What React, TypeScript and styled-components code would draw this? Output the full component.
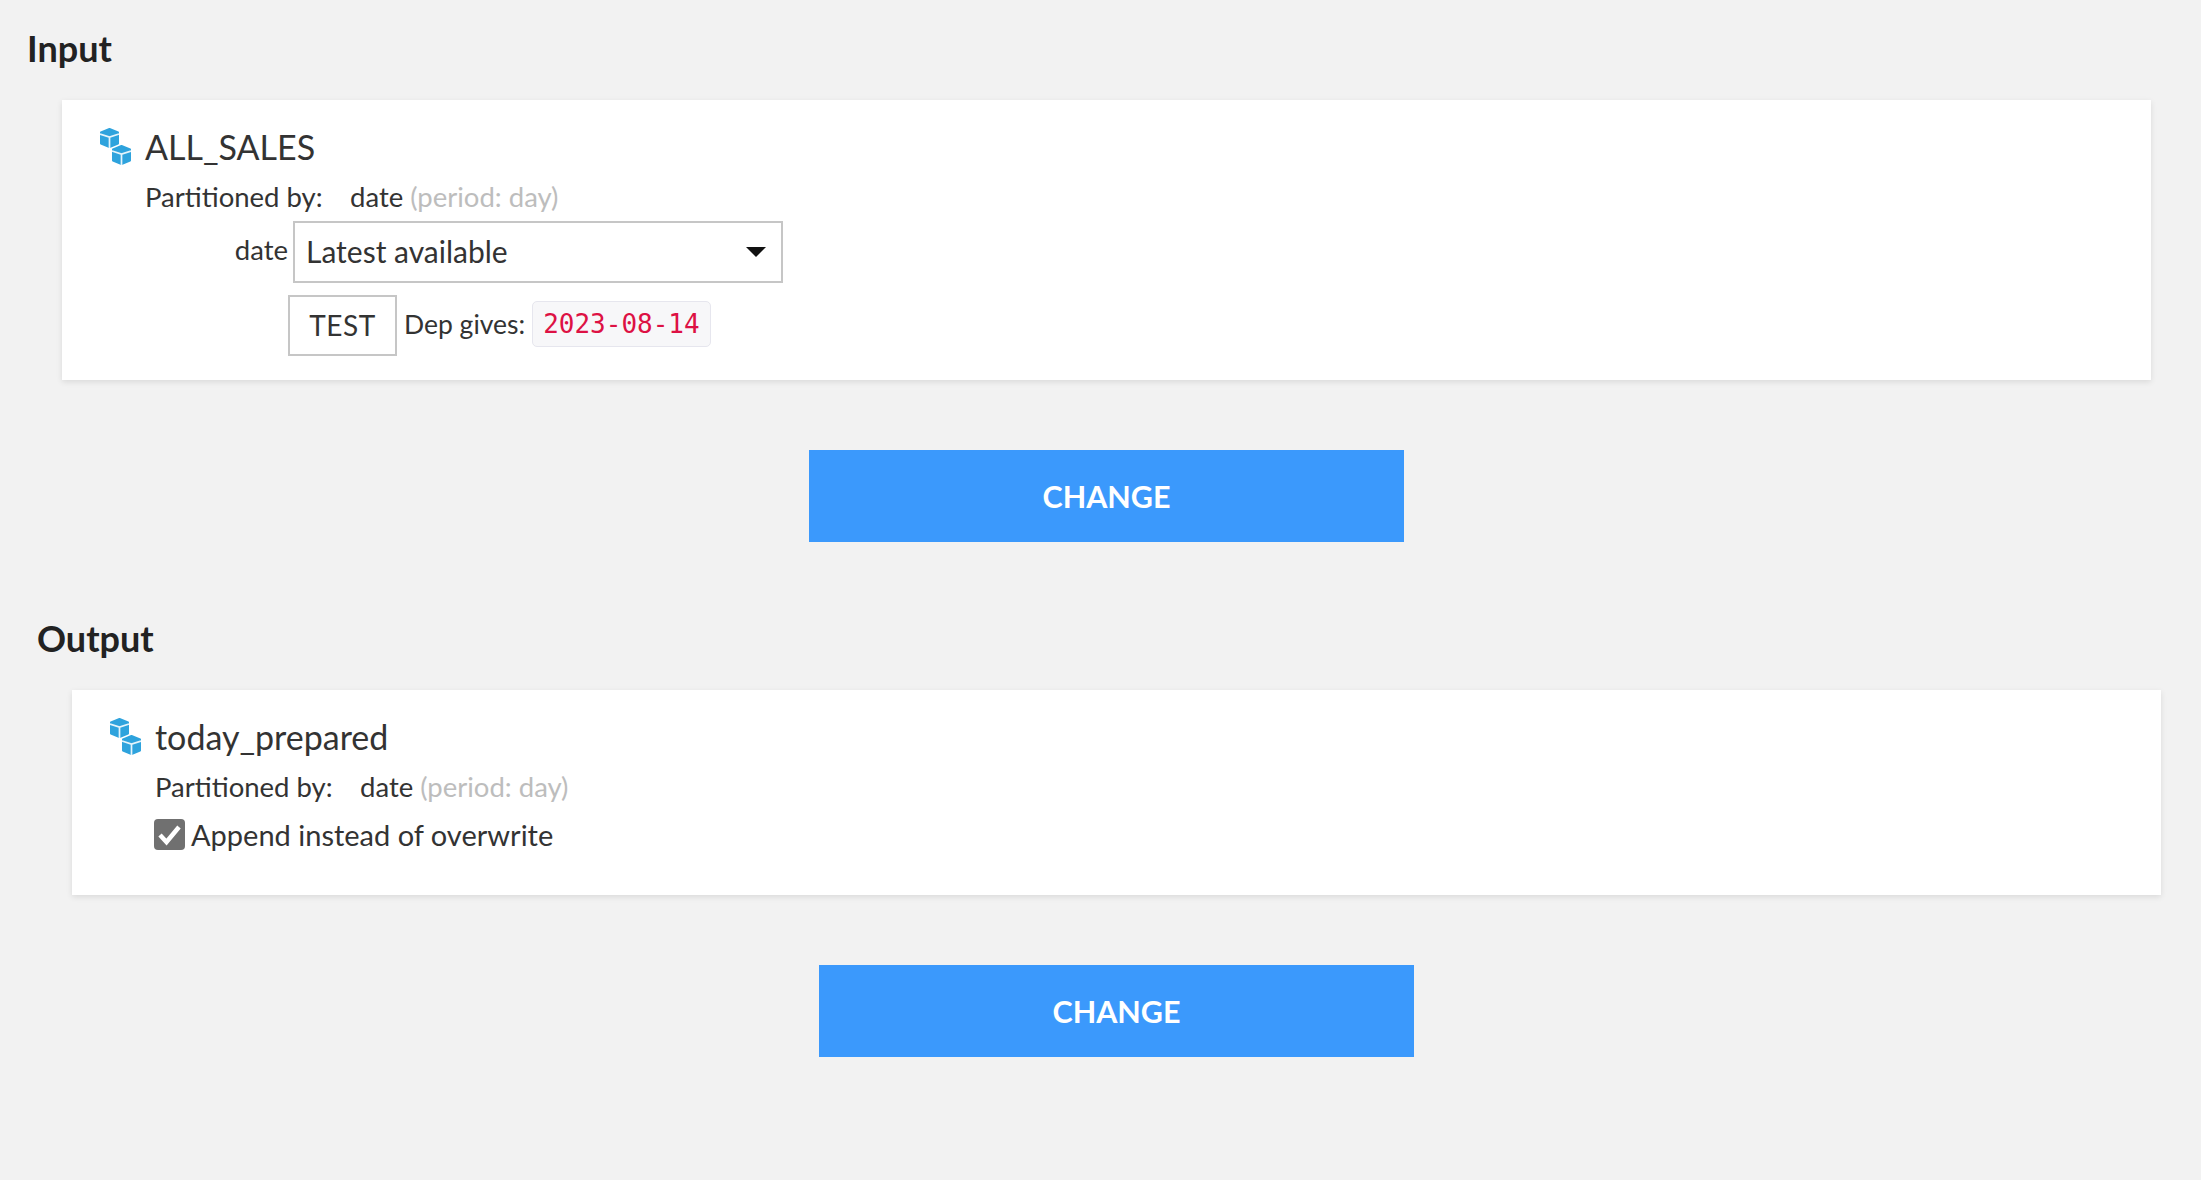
import styled, { createGlobalStyle } from 'styled-components';

const GlobalStyle = createGlobalStyle`
  html, body {
    margin: 0;
    background: #f2f2f2;
  }
  body {
    font-family: 'Lato', 'Noto Sans', sans-serif;
    color: #333;
  }
`;

const Page = styled.div`
  min-height: 1180px;
  padding-top: 27px;
  box-sizing: border-box;
`;

const Section = styled.section<{ $offset: number; $gap?: number }>`
  margin-left: ${({ $offset }) => $offset}px;
  margin-top: ${({ $gap }) => $gap ?? 0}px;
  width: 2124px;
`;

const Title = styled.h2`
  margin: -1px 0 30px;
  font-size: 36px;
  line-height: 44px;
  font-weight: 700;
  color: #222;
`;

const Card = styled.div`
  margin-left: 35px;
  width: 2089px;
  box-sizing: border-box;
  background: #fff;
  box-shadow: 0 2px 6px rgba(0, 0, 0, 0.1);
  padding: 26px 0 24px 38px;
`;

const NameRow = styled.div`
  display: flex;
  align-items: center;
  gap: 14px;
  height: 40px;
`;

const DatasetName = styled.span`
  font-size: 34px;
  color: #333;
`;

const Details = styled.div`
  margin-left: 45px;
  margin-top: 12px;
`;

const PartitionRow = styled.div`
  display: flex;
  align-items: center;
  height: 36px;
  font-size: 27.5px;
`;

const PartitionLabel = styled.span`
  width: 205px;
`;

const Period = styled.span`
  margin-left: 7px;
  color: #bdbdbd;
`;

const SelectRow = styled.div`
  display: flex;
  align-items: center;
  gap: 5px;
  margin-top: 7px;
  font-size: 27.5px;
`;

const SelectLabel = styled.span`
  width: 143px;
  text-align: right;
  margin-top: -6px;
`;

const Select = styled.div`
  display: flex;
  align-items: center;
  justify-content: space-between;
  width: 490px;
  height: 62px;
  box-sizing: border-box;
  padding: 0 15px 2px 11px;
  background: #fff;
  border: 2px solid #c6c6c6;
  font-size: 30px;
`;

const Caret = styled.span`
  width: 0;
  height: 0;
  margin-top: 2px;
  border-left: 10px solid transparent;
  border-right: 10px solid transparent;
  border-top: 10px solid #111;
`;

const TestRow = styled.div`
  display: flex;
  align-items: center;
  margin: 12px 0 0 143px;
  padding-bottom: 3px;
  font-size: 26.5px;
`;

const TestButton = styled.button`
  width: 109px;
  height: 61px;
  box-sizing: border-box;
  background: #fff;
  border: 2px solid #c6c6c6;
  color: #333;
  font-family: inherit;
  font-size: 28px;
  letter-spacing: 0.5px;
  padding: 0 0 2px;
  margin: 0 7px -3px 0;
`;

const Code = styled.code`
  display: inline-block;
  margin-left: 7px;
  padding: 0 10px;
  height: 46px;
  line-height: 44px;
  box-sizing: border-box;
  font-family: 'DejaVu Sans Mono', 'Liberation Mono', monospace;
  font-size: 26px;
  color: #dd1144;
  background: #f7f7f9;
  border: 1px solid #e6e6ee;
  border-radius: 5px;
`;

const CheckRow = styled.label`
  display: flex;
  align-items: center;
  gap: 6px;
  margin-top: 13px;
  margin-bottom: 19px;
  font-size: 29px;
`;

const CheckBox = styled.span`
  display: flex;
  align-items: center;
  justify-content: center;
  width: 31px;
  height: 31px;
  margin-left: -1px;
  border-radius: 4px;
  background: #707070;
`;

const ButtonRow = styled.div`
  display: flex;
  justify-content: center;
  margin: 70px 0 0 35px;
  width: 2089px;
`;

const ChangeButton = styled.button`
  width: 595px;
  height: 92px;
  border: 0;
  background: #3b99fc;
  color: #fff;
  font-family: inherit;
  font-size: 30.5px;
  font-weight: 700;
`;

const DatasetIcon = () => (
  <svg width="31" height="37" viewBox="0 0 31 37" aria-hidden="true">
    {[
      [0, 0],
      [12, 17],
    ].map(([x, y]) => (
      <g key={x} transform={`translate(${x} ${y})`}>
        <path
          d="M9.5 1 18 4.5v11L9.5 19 1 15.5v-11z"
          fill="#2ea3dd"
          stroke="#2ea3dd"
          strokeWidth="2"
          strokeLinejoin="round"
        />
        <path d="M0 6 9.5 9 19 6M9.5 9v11" fill="none" stroke="#e4f4fb" strokeWidth="1.7" />
      </g>
    ))}
  </svg>
);

const Partition = () => (
  <PartitionRow>
    <PartitionLabel>Partitioned by:</PartitionLabel>
    date
    <Period>(period: day)</Period>
  </PartitionRow>
);

const App = () => (
  <Page>
    <GlobalStyle />
    <Section $offset={27}>
      <Title>Input</Title>
      <Card>
        <NameRow>
          <DatasetIcon />
          <DatasetName>ALL_SALES</DatasetName>
        </NameRow>
        <Details>
          <Partition />
          <SelectRow>
            <SelectLabel>date</SelectLabel>
            <Select>
              Latest available
              <Caret />
            </Select>
          </SelectRow>
          <TestRow>
            <TestButton>TEST</TestButton>
            Dep gives:
            <Code>2023-08-14</Code>
          </TestRow>
        </Details>
      </Card>
      <ButtonRow>
        <ChangeButton>CHANGE</ChangeButton>
      </ButtonRow>
    </Section>
    <Section $offset={37} $gap={75}>
      <Title>Output</Title>
      <Card>
        <NameRow>
          <DatasetIcon />
          <DatasetName>today_prepared</DatasetName>
        </NameRow>
        <Details>
          <Partition />
          <CheckRow>
            <CheckBox>
              <svg width="25" height="23" viewBox="0 0 25 23" aria-hidden="true">
                <path d="M3 12 9.5 19 22 4" fill="none" stroke="#fff" strokeWidth="4.5" />
              </svg>
            </CheckBox>
            Append instead of overwrite
          </CheckRow>
        </Details>
      </Card>
      <ButtonRow>
        <ChangeButton>CHANGE</ChangeButton>
      </ButtonRow>
    </Section>
  </Page>
);

export default App;
